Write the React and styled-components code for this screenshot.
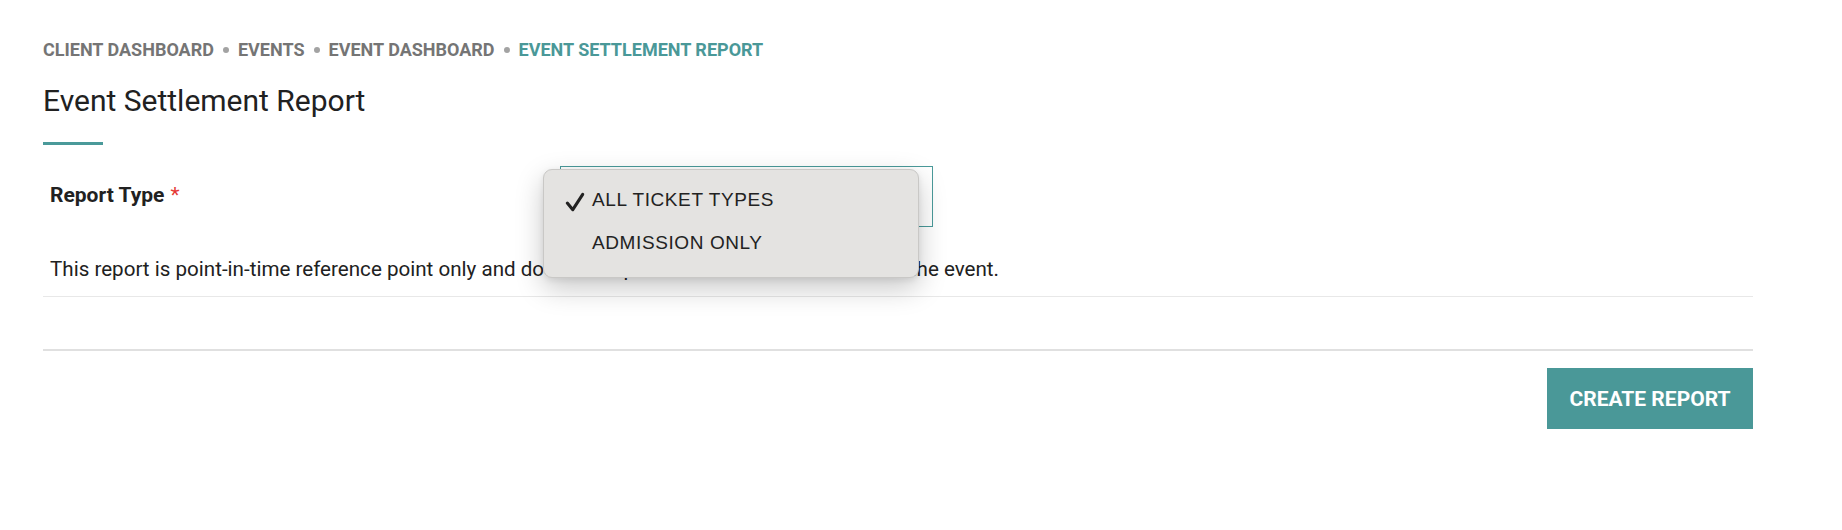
import React from 'react';
import styled, { createGlobalStyle } from 'styled-components';

const GlobalStyle = createGlobalStyle`
  body { margin: 0; background: #fff; font-family: Roboto, "Liberation Sans", sans-serif; color: #212121; }
`;

const Page = styled.div`
  padding: 40px 89px 0 43px;
`;

const Crumbs = styled.nav`
  display: flex;
  align-items: center;
  gap: 8px;
  font-size: 18px;
  font-weight: 700;
  line-height: 20px;
  text-transform: uppercase;
`;

const Crumb = styled.span`
  color: ${({ $active }) => ($active ? '#4a9898' : '#757575')};
`;

const Dot = styled.span`
  width: 6px;
  height: 6px;
  margin: 0 1px;
  border-radius: 50%;
  background: #a3a3a3;
`;

const Title = styled.h1`
  margin: 24px 0 0;
  font-size: 30px;
  font-weight: 400;
  line-height: 34px;
  color: #212121;
`;

const TitleRule = styled.div`
  width: 60px;
  height: 3px;
  margin-top: 24px;
  background: #4a9a9a;
`;

const Section = styled.div`
  padding: 0 7px;
  border-bottom: 1px solid #e8e8e8;
`;

const FieldRow = styled.div`
  display: grid;
  grid-template-columns: 510px 373px;
  align-items: center;
  margin-top: 21px;
`;

const Label = styled.label`
  font-size: 21px;
  font-weight: 700;
  color: #212121;
  margin-top: -4px;
  span { color: #e53935; font-weight: 400; margin-left: 6px; }
`;

const SelectWrap = styled.div`
  position: relative;
`;

const SelectBox = styled.div`
  height: 61px;
  box-sizing: border-box;
  border: 1px solid #4a9a9a;
  background: #fff;
`;

const Menu = styled.ul`
  position: absolute;
  left: -17px;
  top: 3px;
  width: 376px;
  height: 109px;
  box-sizing: border-box;
  margin: 0;
  padding: 8px 0 0;
  list-style: none;
  background: #e4e3e1;
  border: 1px solid #c9c8c6;
  border-radius: 9px;
  box-shadow: 0 10px 28px rgba(0, 0, 0, 0.22), 0 2px 6px rgba(0, 0, 0, 0.08);
  font-family: "Liberation Sans", Inter, sans-serif;
  font-size: 19px;
  letter-spacing: 0.6px;
  color: #222;
`;

const Option = styled.li`
  display: flex;
  align-items: center;
  height: 43px;
  padding-left: 48px;
  position: relative;
`;

const Check = styled.svg`
  position: absolute;
  left: 20px;
  top: 13px;
`;

const Note = styled.p`
  margin: 30px 0 0;
  padding-bottom: 15px;
  font-size: 20.6px;
  line-height: 24px;
  color: #212121;
`;

const Footer = styled.div`
  margin-top: 52px;
  border-top: 2px solid #e0e0e0;
  display: flex;
  justify-content: flex-end;
  padding-top: 17px;
`;

const Button = styled.button`
  width: 206px;
  height: 61px;
  border: 0;
  background: #4a9898;
  color: #fff;
  font-family: Roboto, sans-serif;
  font-size: 21px;
  font-weight: 700;
  text-transform: uppercase;
  cursor: pointer;
`;

export default function App() {
  return (
    <Page>
      <GlobalStyle />
      <Crumbs>
        <Crumb>Client Dashboard</Crumb>
        <Dot />
        <Crumb>Events</Crumb>
        <Dot />
        <Crumb>Event Dashboard</Crumb>
        <Dot />
        <Crumb $active>Event Settlement Report</Crumb>
      </Crumbs>
      <Title>Event Settlement Report</Title>
      <TitleRule />
      <Section>
        <FieldRow>
          <Label>Report Type<span>*</span></Label>
          <SelectWrap>
            <SelectBox />
            <Menu>
              <Option>
                <Check width="22" height="22" viewBox="0 0 20 20">
                  <path d="M3 11 L8 17 L17 3" fill="none" stroke="#222" strokeWidth="2.8" strokeLinecap="round" strokeLinejoin="round" />
                </Check>
                ALL TICKET TYPES
              </Option>
              <Option>ADMISSION ONLY</Option>
            </Menu>
          </SelectWrap>
        </FieldRow>
        <Note>This report is point-in-time reference point only and does not represent the final settlement for the event.</Note>
      </Section>
      <Footer>
        <Button>Create Report</Button>
      </Footer>
    </Page>
  );
}
